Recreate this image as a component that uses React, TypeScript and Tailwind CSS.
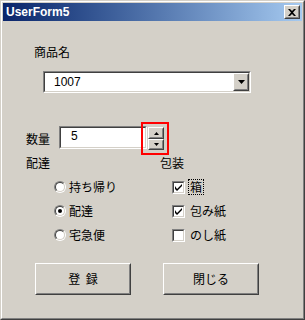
import React from "react";

const jp = { fontFamily: '"Noto Sans CJK JP", "Noto Sans", sans-serif' };
const latin = { fontFamily: '"Liberation Sans", Arial, sans-serif' };

function Raised({ className = "", children }: { className?: string; children?: React.ReactNode }) {
  return (
    <div className={`border border-t-white border-l-white border-r-[#404040] border-b-[#404040] ${className}`}>
      <div className="w-full h-full border border-t-[#D4D0C8] border-l-[#D4D0C8] border-r-[#808080] border-b-[#808080] flex items-center justify-center bg-[#D4D0C8]">
        {children}
      </div>
    </div>
  );
}

function Sunken({ className = "", children }: { className?: string; children?: React.ReactNode }) {
  return (
    <div className={`border border-t-[#808080] border-l-[#808080] border-r-white border-b-white ${className}`}>
      <div className="w-full h-full border border-t-[#404040] border-l-[#404040] border-r-[#D4D0C8] border-b-[#D4D0C8] bg-white flex">
        {children}
      </div>
    </div>
  );
}

function Radio({ label, checked }: { label: string; checked?: boolean }) {
  return (
    <div className="h-[24px] flex items-center">
      <span className="w-[12px] h-[12px] rounded-full border border-t-[#808080] border-l-[#808080] border-r-white border-b-white flex">
        <span className="w-full h-full rounded-full border border-t-[#404040] border-l-[#404040] border-r-[#D4D0C8] border-b-[#D4D0C8] bg-white flex items-center justify-center">
          {checked && <span className="w-[4px] h-[4px] rounded-full bg-black" />}
        </span>
      </span>
      <span className="ml-[3px] text-[12px] leading-[12px] text-black" style={jp}>
        {label}
      </span>
    </div>
  );
}

function Check({ label, checked, focus }: { label: string; checked?: boolean; focus?: boolean }) {
  return (
    <div className="h-[24px] flex items-center">
      <Sunken className="w-[13px] h-[13px]">
        {checked && (
          <svg width="9" height="9" viewBox="0 0 9 9" className="m-auto">
            <path d="M1 3v3l2 2 5-5V1L3 6z" fill="black" />
          </svg>
        )}
      </Sunken>
      <span
        className={`ml-[3px] text-[12px] leading-[14px] text-black px-px ${
          focus ? "border border-dotted border-black" : "border border-transparent"
        }`}
        style={jp}
      >
        {label}
      </span>
    </div>
  );
}

export default function App() {
  return (
    <div className="w-[305px] h-[320px] border border-t-[#D4D0C8] border-l-[#D4D0C8] border-r-[#404040] border-b-[#404040] bg-[#D4D0C8]">
      <div className="w-full h-full border border-t-white border-l-white border-r-[#808080] border-b-[#808080] p-px flex flex-col">
        {/* Title bar */}
        <div className="h-[18px] flex items-center justify-between bg-gradient-to-r from-[#0A246A] to-[#A6CAF0]">
          <span className="ml-[3px] text-[12px] font-bold text-white leading-none" style={latin}>
            UserForm5
          </span>
          <Raised className="w-[16px] h-[14px] mr-[2px]">
            <svg width="8" height="7" viewBox="0 0 8 7">
              <path d="M0 0h2l2 2 2-2h2L5 3.5 8 7H6L4 5 2 7H0l3-3.5z" fill="black" />
            </svg>
          </Raised>
        </div>

        {/* Body */}
        <div className="relative flex-1 flex flex-col">
          <div className="ml-[31px] mt-[25px] text-[12px] leading-[12px] text-black" style={jp}>
            商品名
          </div>

          <Sunken className="ml-[40px] mt-[13px] w-[208px] h-[22px]">
            <span className="flex-1 pl-[9px] pt-[2px] text-[12px] leading-[14px] text-black" style={latin}>
              1007
            </span>
            <Raised className="w-[16px] h-[18px]">
              <svg width="7" height="4" viewBox="0 0 7 4">
                <path d="M0 0h7L3.5 4z" fill="black" />
              </svg>
            </Raised>
          </Sunken>

          <div className="ml-[23px] mt-[33px] flex items-start">
            <span className="mt-[7px] w-[33px] text-[12px] leading-[12px] text-black" style={jp}>
              数量
            </span>
            <Sunken className="w-[88px] h-[23px]">
              <span className="pl-[10px] pt-[1px] text-[12px] leading-[14px] text-black" style={latin}>
                5
              </span>
            </Sunken>
            <div className="ml-[1px] mt-[1px] flex flex-col">
              <Raised className="w-[16px] h-[12px]">
                <svg width="5" height="3" viewBox="0 0 5 3">
                  <path d="M2.5 0L5 3H0z" fill="black" />
                </svg>
              </Raised>
              <Raised className="w-[16px] h-[11px]">
                <svg width="5" height="3" viewBox="0 0 5 3">
                  <path d="M0 0h5L2.5 3z" fill="black" />
                </svg>
              </Raised>
            </div>
          </div>

          <div className="mt-[7px] flex">
            <div className="ml-[23px] w-[134px]">
              <div className="text-[12px] leading-[12px] text-black" style={jp}>
                配達
              </div>
              <div className="ml-[28px] mt-[6px] flex flex-col">
                <Radio label="持ち帰り" />
                <Radio label="配達" checked />
                <Radio label="宅急便" />
              </div>
            </div>
            <div>
              <div className="text-[12px] leading-[12px] text-black" style={jp}>
                包装
              </div>
              <div className="ml-[12px] mt-[6px] flex flex-col">
                <Check label="箱" checked focus />
                <Check label="包み紙" checked />
                <Check label="のし紙" />
              </div>
            </div>
          </div>

          <div className="mt-[16px] ml-[32px] flex gap-[32px]">
            <Raised className="w-[96px] h-[32px]">
              <span className="text-[12px] leading-[12px] text-black" style={jp}>
                登&nbsp;&nbsp;録
              </span>
            </Raised>
            <Raised className="w-[96px] h-[32px]">
              <span className="text-[12px] leading-[12px] text-black" style={jp}>
                閉じる
              </span>
            </Raised>
          </div>

          {/* annotation highlight around spin button */}
          <div className="absolute left-[138px] top-[101px] w-[28px] h-[33px] border-2 border-[#FF0000]" />
        </div>
      </div>
    </div>
  );
}
